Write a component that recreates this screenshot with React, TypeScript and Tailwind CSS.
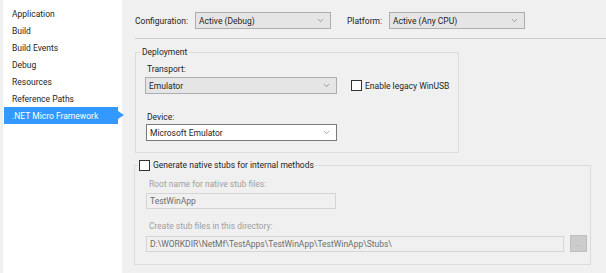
import { ChevronDown } from 'lucide-react'

const pages = [
  'Application',
  'Build',
  'Build Events',
  'Debug',
  'Resources',
  'Reference Paths',
  '.NET Micro Framework',
]

function Combo({ value, white, className }: { value: string; white?: boolean; className: string }) {
  return (
    <div
      className={`h-[17px] flex items-center justify-between pl-[3px] pr-[5px] border ${
        white ? 'bg-white border-[#7a7a7a]' : 'bg-[#e5e5e5] border-[#adadad]'
      } ${className}`}
    >
      <span>{value}</span>
      <ChevronDown className="w-[9px] h-[9px] text-[#606060]" strokeWidth={1.5} />
    </div>
  )
}

function Check() {
  return <div className="w-[11px] h-[11px] bg-white border border-[#333333] shrink-0" />
}

export default function App() {
  return (
    <div className="w-[606px] h-[273px] bg-[#f0f0f0] flex overflow-hidden whitespace-nowrap font-['Roboto',sans-serif] text-[8.5px] leading-[12px] text-[#1e1e1e]">
      {/* Page list */}
      <nav className="ml-[3px] w-[119px] bg-white pt-[5px] flex flex-col">
        {pages.map((p, i) =>
          i === pages.length - 1 ? (
            <div key={p} className="relative ml-[1px] w-[114px] h-[17px] flex items-center pl-[8px] bg-[#3399ff] text-white">
              {p}
              <div className="absolute right-[-6px] top-[4px] w-0 h-0 border-y-[4px] border-y-transparent border-l-[6px] border-l-[#3399ff]" />
            </div>
          ) : (
            <div key={p} className="ml-[1px] h-[17px] flex items-center pl-[8px]">
              {p}
            </div>
          )
        )}
      </nav>

      <main className="flex-1 pl-[13px] pt-[12px] flex flex-col">
        {/* Configuration / Platform */}
        <div className="flex items-center h-[17px]">
          <span className="w-[60px]">Configuration:</span>
          <Combo value="Active (Debug)" className="w-[136px]" />
          <span className="ml-[16px] w-[42px]">Platform:</span>
          <Combo value="Active (Any CPU)" className="w-[136px]" />
        </div>
        <div className="mt-[9px] h-px bg-[#cacaca]" />

        {/* Deployment */}
        <fieldset className="mt-[7px] w-[324px] border border-[#dcdcdc] px-[9px] pt-[5px] pb-[11px]">
          <legend className="-ml-[5px] px-[2px]">Deployment</legend>
          <div className="pl-[2px]">Transport:</div>
          <div className="mt-[2px] flex items-center">
            <Combo value="Emulator" className="w-[192px] h-[16px]" />
            <div className="ml-[14px] flex items-center gap-[3px]">
              <Check />
              <span>Enable legacy WinUSB</span>
            </div>
          </div>
          <div className="mt-[17px] pl-[2px]">Device:</div>
          <Combo value="Microsoft Emulator" white className="mt-[1px] ml-[1px] w-[191px]" />
        </fieldset>

        {/* Native stubs */}
        <fieldset className="mt-[6px] -ml-px w-[457px] border border-[#dcdcdc] pl-[11px] pt-[7px] pb-[12px]">
          <legend className="-ml-[8px] px-[1px] flex items-center">
            <Check />
            <span className="ml-[3px]">Generate native stubs for internal methods</span>
          </legend>
          <div className="pl-[3px] text-[#a0a0a0]">Root name for native stub files:</div>
          <div className="mt-[3px] w-[190px] h-[16px] flex items-center pl-[3px] border border-[#d5d5d5] text-[#6d6d6d]">
            TestWinApp
          </div>
          <div className="mt-[11px] pl-[3px] text-[#a0a0a0]">Create stub files in this directory:</div>
          <div className="mt-[3px] flex items-center gap-[6px]">
            <div className="w-[418px] h-[16px] flex items-center pl-[3px] border border-[#d5d5d5] text-[#6d6d6d]">
              D:\WORKDIR\NetMf\TestApps\TestWinApp\TestWinApp\Stubs\
            </div>
            <div className="w-[17px] h-[17px] bg-[#cccccc] border border-[#bfbfbf] flex items-center justify-center text-[#a8a8a8] text-[7px]">
              ...
            </div>
          </div>
        </fieldset>
      </main>
    </div>
  )
}
